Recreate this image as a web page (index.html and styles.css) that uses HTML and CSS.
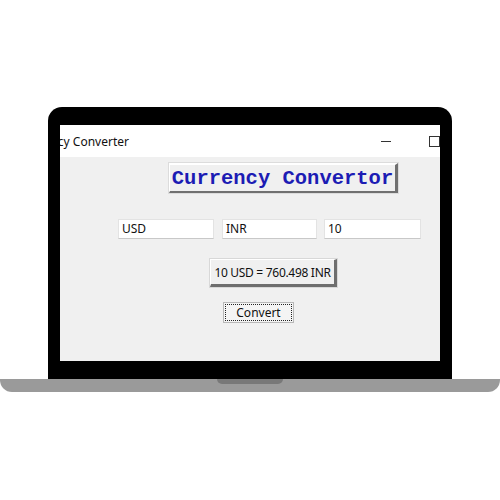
FILE: index.html
```html
<!DOCTYPE html>
<html>
<head>
<meta charset="utf-8">
<link rel="stylesheet" href="styles.css">
</head>
<body>
<div class="stage">
  <div class="bezel">
    <div class="screen">
      <div class="titlebar">
        <span class="title">Currency Converter</span>
        <span class="spacer"></span>
        <span class="ctl-min"></span>
        <span class="ctl-max"></span>
      </div>
      <div class="content">
        <div class="heading">Currency Convertor</div>
        <div class="entries">
          <div class="entry e1">USD</div>
          <div class="entry e2">INR</div>
          <div class="entry e3">10</div>
        </div>
        <div class="result">10 USD = 760.498 INR</div>
        <div class="convert"><span class="focus">Convert</span></div>
      </div>
    </div>
  </div>
  <div class="base"><div class="notch"></div></div>
</div>
</body>
</html>
```
FILE: styles.css
```css
html, body {
  margin: 0;
  padding: 0;
  background: #ffffff;
}
body {
  width: 500px;
  height: 500px;
  overflow: hidden;
  font-family: "Noto Sans", "Open Sans", sans-serif;
}
.stage {
  padding-top: 107px;
  display: flex;
  flex-direction: column;
  align-items: center;
}
.bezel {
  width: 380px;
  background: #000;
  border-radius: 14px 14px 0 0;
  padding: 18px 12px 18px 12px;
}
.screen {
  height: 236px;
  background: #f0f0f0;
  overflow: hidden;
  display: flex;
  flex-direction: column;
}
.titlebar {
  height: 32px;
  background: #ffffff;
  display: flex;
  align-items: center;
  overflow: hidden;
  flex-shrink: 0;
}
.title {
  font-size: 12px;
  color: #111;
  white-space: nowrap;
  margin-left: -41px;
  margin-top: 1px;
}
.spacer { flex: 1; }
.ctl-min {
  width: 10px;
  height: 1px;
  background: #333;
  margin-right: 38px;
}
.ctl-max {
  width: 9px;
  height: 9px;
  border: 1px solid #333;
  margin-right: 0;
}
.content {
  flex: 1;
  display: flex;
  flex-direction: column;
  align-items: flex-start;
}
.heading {
  margin: 6px 0 0 109px;
  width: 225px;
  height: 26px;
  box-sizing: content-box;
  border-style: solid;
  border-width: 2px 3px 2px 1px;
  border-color: #ffffff #707070 #707070 #ffffff;
  background: #f0f0f0;
  font-family: "Liberation Mono", "DejaVu Sans Mono", monospace;
  font-weight: bold;
  font-size: 20.5px;
  color: #1c1cb4;
  display: flex;
  align-items: center;
  justify-content: center;
  white-space: nowrap;
  box-shadow: 0 0 0 1px #dcdcdc;
}
.entries {
  margin: 26px 0 0 58px;
  display: flex;
  gap: 8px;
}
.entry {
  background: #ffffff;
  border: 1px solid #e3e3e3;
  border-bottom: 1px solid #c8c8c8;
  box-sizing: border-box;
  height: 20px;
  font-size: 12px;
  line-height: 18px;
  padding-left: 3px;
  color: #111;
}
.e1 { width: 96px; }
.e2 { width: 95px; margin-right: -1px; }
.e3 { width: 97px; }
.result {
  margin: 20px 0 0 150px;
  width: 127px;
  height: 28px;
  box-sizing: border-box;
  border-style: solid;
  border-width: 1px 3px 3px 1px;
  border-color: #ffffff #6e6e6e #6e6e6e #ffffff;
  background: #f0f0f0;
  font-size: 12px;
  color: #111;
  display: flex;
  align-items: center;
  justify-content: center;
  white-space: nowrap;
  letter-spacing: -0.3px;
  box-shadow: 0 0 0 1px #d8d8d8;
}
.convert {
  margin: 15px 0 0 163px;
  width: 71px;
  height: 21px;
  box-sizing: border-box;
  border: 1px solid #b8b8b8;
  background: #f4f4f4;
  padding: 1px;
  display: flex;
}
.focus {
  flex: 1;
  border: 1px dotted #222;
  font-size: 12px;
  color: #111;
  display: flex;
  align-items: center;
  justify-content: center;
}
.base {
  width: 500px;
  height: 13px;
  background: #9a9a9a;
  border-radius: 0 0 12px 12px;
  display: flex;
  justify-content: center;
}
.notch {
  width: 66px;
  height: 5px;
  background: #787878;
  border-radius: 0 0 5px 5px;
}
```
